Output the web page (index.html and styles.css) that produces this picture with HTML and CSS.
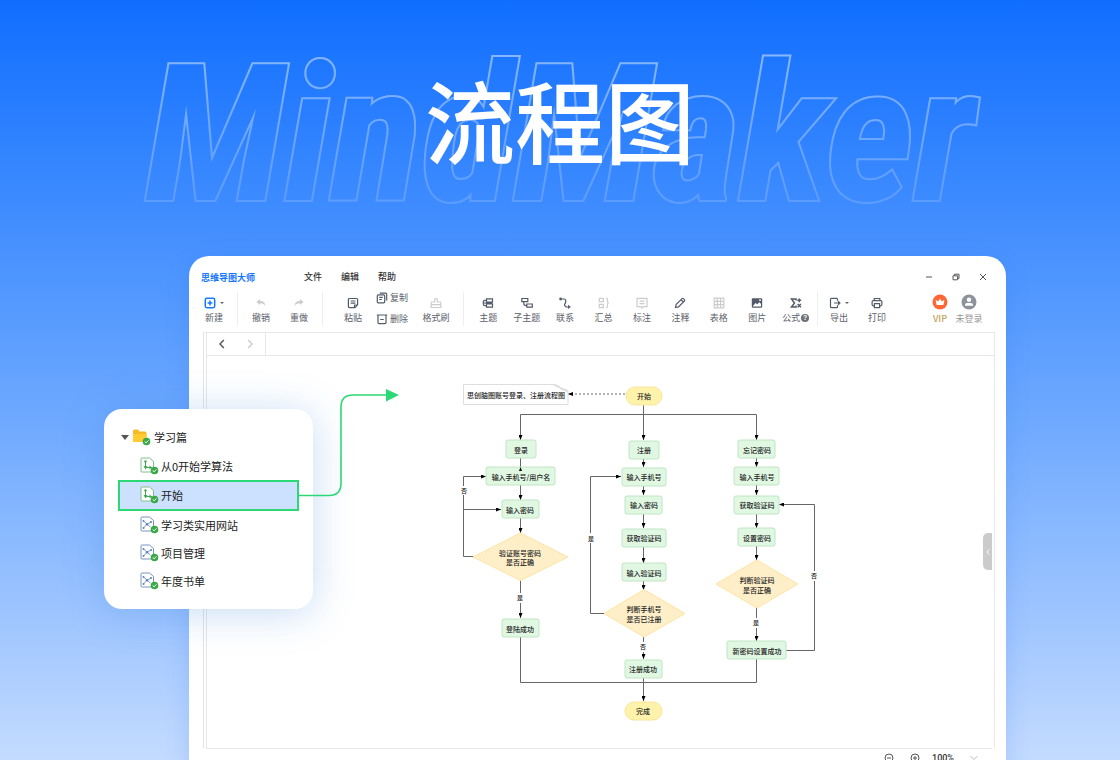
FILE: index.html
```html
<!DOCTYPE html>
<html lang="zh-CN">
<head>
<meta charset="utf-8">
<meta name="viewport" content="width=device-width, initial-scale=1">
<title>流程图 - MindMaker</title>
<link rel="stylesheet" href="styles.css">
</head>
<body>
<main class="page">
  <header class="hero">
    <svg class="watermark" aria-hidden="true">
      <defs>
        <linearGradient id="fade" gradientUnits="userSpaceOnUse" x1="0" y1="40" x2="0" y2="210">
          <stop offset="0" stop-color="#fff" stop-opacity=".5"/>
          <stop offset="1" stop-color="#fff" stop-opacity=".14"/>
        </linearGradient>
        <mask id="outside" maskUnits="userSpaceOnUse" x="0" y="0" width="100%" height="100%">
          <rect width="100%" height="100%" fill="#fff"/>
          <use href="#word" fill="#000" stroke="none"/>
        </mask>
      </defs>
      <g mask="url(#outside)" fill="none" stroke="url(#fade)" stroke-width="4">
        <text id="word" x="50%" y="200">MindMaker</text>
      </g>
    </svg>
    <h1 class="title">流程图</h1>
  </header>

  <div class="stage">
    <section class="window">
      <div class="titlebar">
        <strong class="brand">思维导图大师</strong>
        <nav class="menu">
          <button type="button">文件</button>
          <button type="button">编辑</button>
          <button type="button">帮助</button>
        </nav>
        <div class="controls">
          <button type="button" aria-label="最小化"><svg viewBox="0 0 8 8"><path d="M1 4h6"/></svg></button>
          <button type="button" aria-label="还原"><svg viewBox="0 0 8 8"><path d="M1 2.800h4.600v4H1zM2.400 2.600V1.200H7v4.200H5.800"/></svg></button>
          <button type="button" aria-label="关闭"><svg viewBox="0 0 8 8"><path d="M1 1l6 6M7 1L1 7"/></svg></button>
        </div>
      </div>

      <div class="toolbar">
        <div class="group">
          <button type="button" class="tool new"><span class="with-caret"><svg viewBox="0 0 12 12"><rect x="1.300" y="1.300" width="9.400" height="9.400" rx="1.600"/><path d="M6 3.600v4.800M3.600 6h4.800"/></svg><i class="caret"></i></span>新建</button>
        </div>
        <div class="group history">
          <button type="button" class="tool faded"><svg viewBox="0 0 12 12"><path class="solid" d="M1.500 5L5 2v2c3.600 0 5.200 2 5.500 5C9.300 7 8 6.200 5 6.200V8z"/></svg>撤销</button>
          <button type="button" class="tool faded"><svg viewBox="0 0 12 12"><path class="solid" d="M10.500 5L7 2v2C3.400 4 1.800 6 1.500 9 2.700 7 4 6.200 7 6.200V8z"/></svg>重做</button>
        </div>
        <div class="group edit">
          <button type="button" class="tool"><svg viewBox="0 0 12 12"><path d="M2.400 1.500h7.200q1 0 1 1v5.300L8 10.600H2.400q-1 0-1-1V2.500q0-1 1-1zM3.700 4h4.700M3.700 6.200h4.700M7.500 10.300V8h2.800"/></svg>粘贴</button>
          <div class="stack">
            <button type="button" class="mini"><svg viewBox="0 0 12 12"><path d="M3.800 1.200h5.700q1.200 0 1.200 1.200v6M2.300 2.900h5.400q1 0 1 1v5.900q0 1-1 1H2.300q-1 0-1-1V3.900q0-1 1-1zM3.200 5.300h3.600M3.200 7.500h2.600"/></svg>复制</button>
            <button type="button" class="mini"><svg viewBox="0 0 12 12"><path d="M.8 2h10.400M2 2v7.600q0 1 1 1h6q1 0 1-1V2M4.200 6.500h3.600"/></svg>删除</button>
          </div>
          <button type="button" class="tool faded"><svg viewBox="0 0 12 12"><path d="M4.700 5V2.500q0-1 1.300-1t1.300 1V5h2.700q.8 0 .8.800v4.700H1.200V5.800q0-.8.800-.8zM1.200 7.600h9.600"/></svg>格式刷</button>
        </div>
        <div class="group insert">
          <button type="button" class="tool"><svg viewBox="0 0 12 12"><path d="M4.500 1.800h6v3.200h-6zM4.500 7h6v3.200h-6zM4.500 3.400H3Q1.300 3.400 1.300 5v2q0 1.600 1.700 1.600h1.500M1.500 6h9"/></svg>主题</button>
          <button type="button" class="tool"><svg viewBox="0 0 12 12"><path d="M.8 1.500h6v3.200h-6zM5.800 7h5.500v3.200H5.800zM2.800 4.700v2q0 1.900 3 1.900"/></svg>子主题</button>
          <button type="button" class="tool"><svg viewBox="0 0 12 12"><path d="M1 2h4q1.800 0 1.800 2T5.800 7t1.400 3H10"/><circle class="solid" cx="1.600" cy="2" r="1.400"/><path class="solid" d="M9 7.800l2.800 2.200L9 12z"/></svg>联系</button>
          <button type="button" class="tool faded"><svg viewBox="0 0 12 12"><path d="M1.300 1.300h4v3.400h-4zM1.300 7.300h4v3.400h-4zM8 1q1.500 0 1.500 1.500V4.500Q9.500 6 10.800 6 9.500 6 9.500 7.500v2Q9.500 11 8 11"/></svg>汇总</button>
          <button type="button" class="tool faded"><svg viewBox="0 0 12 12"><path d="M1 1.300h10v8.400H7.200L6 11 4.800 9.700H1zM3.500 4.200h5M3.500 6.700h5"/></svg>标注</button>
          <button type="button" class="tool"><svg viewBox="0 0 12 12"><path d="M1.500 10.500l.6-3L8 1.600q.7-.6 1.400 0l1 1q.6.7 0 1.400L4.500 9.900zM7 2.800L9.300 5"/></svg>注释</button>
          <button type="button" class="tool faded"><svg viewBox="0 0 12 12"><path d="M1.200 1.200h9.600v9.600H1.200zM4.400 1.200v9.600M7.600 1.200v9.600M1.200 4.400h9.600M1.200 7.600h9.600"/></svg>表格</button>
          <button type="button" class="tool"><svg viewBox="0 0 12 12"><rect class="solid" x=".8" y="1.200" width="10.400" height="9.600" rx="1"/><path class="paper" d="M2 9l2.500-3 1.700 1.200 2.300-2L10 7v2.500H2zM8 2.500h2v1.200H8z"/></svg>图片</button>
          <button type="button" class="tool"><svg viewBox="0 0 12 12"><path class="heavy" d="M6 3.500V2H1.500l3 4-3 4H6V8.500M7.300 3.300h3.900M9.250 1.400v3.800M7.600 7l3.300 3.200M10.900 7l-3.300 3.200"/></svg><span class="help-label">公式<i class="help">?</i></span></button>
        </div>
        <div class="group output">
          <button type="button" class="tool"><span class="with-caret"><svg viewBox="0 0 12 12"><path d="M8.500 3.800V2.300q0-1-1-1h-5q-1 0-1 1v7.400q0 1 1 1h5q1 0 1-1V8.200M5 6h5.500M9 4.200L10.900 6 9 7.800"/></svg><i class="caret"></i></span>导出</button>
          <button type="button" class="tool"><svg viewBox="0 0 12 12"><path d="M3.200 3.600V1.500h5.600v2.100M3.200 8.800H2.300q-1.200 0-1.200-1.200V4.800q0-1.200 1.200-1.200h7.400q1.200 0 1.200 1.200v2.800q0 1.200-1.200 1.200h-.9M3.400 6.700h5.200v3.900H3.400z"/></svg>打印</button>
        </div>
        <div class="account">
          <button type="button" class="vip"><svg viewBox="0 0 16 16"><circle cx="8" cy="8" r="7.500" fill="#ff6633"/><path d="M4.600 11L3.600 5.800l2.600 1.600L8 4.400l1.800 3 2.600-1.600-1 5.200z" fill="#fff"/></svg>VIP</button>
          <button type="button" class="user"><svg viewBox="0 0 16 16"><circle cx="8" cy="8" r="7.500" fill="#8d929b"/><circle cx="8" cy="5.800" r="2.200" fill="#fff"/><path d="M4 11.800v-1q0-1.800 2-1.800h4q2 0 2 1.800v1z" fill="#fff"/></svg>未登录</button>
        </div>
      </div>

      <div class="workspace">
        <div class="tabs">
          <div class="pager">
            <button type="button" aria-label="后退"><svg viewBox="0 0 10 10"><path d="M6.800 1L3 5l3.800 4"/></svg></button>
            <button type="button" class="off" aria-label="前进"><svg viewBox="0 0 10 10"><path d="M3.200 1L7 5 3.200 9"/></svg></button>
          </div>
        </div>
        <div class="canvas">
          <svg class="chart" viewBox="207 356 787 392" role="img" aria-label="账号登录与注册流程图">
            <defs>
              <marker id="tip" viewBox="0 0 5 4" refX="5" refY="2" markerWidth="5" markerHeight="4" markerUnits="userSpaceOnUse" orient="auto"><path d="M0 0l5 2-5 2z"/></marker>
            </defs>
            <g class="wire">
              <path class="dashed" d="M625 394H574"/>
              <path d="M573 394H568" marker-end="url(#tip)"/>
              <path d="M643.500 405v35" marker-end="url(#tip)"/>
              <path d="M643.500 414.500H520.500V440" marker-end="url(#tip)"/>
              <path d="M643.500 414.500H756.500V440" marker-end="url(#tip)"/>
              <path d="M520.500 458v10"/>
              <path d="M520.500 485v15" marker-end="url(#tip)"/>
              <path d="M520.500 518v15" marker-end="url(#tip)"/>
              <path d="M520.500 580v38" marker-end="url(#tip)"/>
              <path d="M474 556.500H463.500V476.500H486" marker-end="url(#tip)"/>
              <path d="M463.500 509.500H501" marker-end="url(#tip)"/>
              <path d="M643.500 458v9" marker-end="url(#tip)"/>
              <path d="M643.500 486v9" marker-end="url(#tip)"/>
              <path d="M643.500 514v14" marker-end="url(#tip)"/>
              <path d="M643.500 546v17" marker-end="url(#tip)"/>
              <path d="M643.500 581v9" marker-end="url(#tip)"/>
              <path d="M643.500 637v22" marker-end="url(#tip)"/>
              <path d="M643.500 677v24" marker-end="url(#tip)"/>
              <path d="M604 613.500H590.500V476.500H621" marker-end="url(#tip)"/>
              <path d="M756.500 458v9" marker-end="url(#tip)"/>
              <path d="M756.500 485v10" marker-end="url(#tip)"/>
              <path d="M756.500 513v15" marker-end="url(#tip)"/>
              <path d="M756.500 546v14" marker-end="url(#tip)"/>
              <path d="M756.500 608v33" marker-end="url(#tip)"/>
              <path d="M786 650.500H814.500V504.500H779" marker-end="url(#tip)"/>
              <path d="M520.500 637v45.500H756.500V659"/>
            </g>
            <g class="note">
              <path d="M463.500 384.500H554L568 391V404.500H463.500z"/>
              <path class="fold" d="M553 384.500Q560 385 562 390 567 388 568 392z"/>
            </g>
            <g class="pill">
              <rect x="626" y="387" width="36" height="18" rx="9"/>
              <rect x="625" y="702" width="37" height="18" rx="9"/>
            </g>
            <g class="step">
              <rect x="506" y="440" width="30" height="18" rx="2"/>
              <rect x="486" y="467" width="69" height="18" rx="2"/>
              <rect x="502" y="500" width="37" height="18" rx="2"/>
              <rect x="502" y="619" width="37" height="18" rx="2"/>
              <rect x="629" y="441" width="30" height="18" rx="2"/>
              <rect x="622" y="468" width="44" height="18" rx="2"/>
              <rect x="625" y="496" width="37" height="18" rx="2"/>
              <rect x="622" y="529" width="44" height="18" rx="2"/>
              <rect x="622" y="563" width="44" height="18" rx="2"/>
              <rect x="625" y="660" width="37" height="18" rx="2"/>
              <rect x="738" y="440" width="37" height="18" rx="2"/>
              <rect x="734" y="467" width="45" height="18" rx="2"/>
              <rect x="734" y="496" width="45" height="18" rx="2"/>
              <rect x="738" y="528" width="37" height="18" rx="2"/>
              <rect x="727" y="641" width="59" height="18" rx="2"/>
            </g>
            <path class="mark" d="M519 471l1.500-4 1.500 4z"/>
            <g class="choice">
              <path d="M473 557l47.500-24 47.500 24-47.500 23.500z"/>
              <path d="M604 613.500l40-24 41 24-41 23.500z"/>
              <path d="M716 584l41-24 41 24-41 24z"/>
            </g>
            <g class="gap">
              <rect x="460" y="486" width="8" height="9"/>
              <rect x="516" y="593" width="9" height="10"/>
              <rect x="587" y="533" width="8" height="10"/>
              <rect x="639" y="642" width="9" height="10"/>
              <rect x="752" y="618" width="9" height="10"/>
              <rect x="810" y="571" width="9" height="10"/>
            </g>
            <g class="label">
              <text x="516" y="398">思创脑图账号登录、注册流程图</text>
              <text x="644" y="399">开始</text>
              <text x="521" y="453">登录</text>
              <text x="521" y="480">输入手机号/用户名</text>
              <text x="520" y="513">输入密码</text>
              <text x="520" y="556">验证账号密码</text>
              <text x="520" y="565">是否正确</text>
              <text x="520" y="632">登陆成功</text>
              <text x="644" y="453">注册</text>
              <text x="644" y="480">输入手机号</text>
              <text x="644" y="508">输入密码</text>
              <text x="644" y="541">获取验证码</text>
              <text x="644" y="576">输入验证码</text>
              <text x="644" y="612">判断手机号</text>
              <text x="644" y="622">是否已注册</text>
              <text x="643" y="672">注册成功</text>
              <text x="643" y="714">完成</text>
              <text x="757" y="453">忘记密码</text>
              <text x="757" y="480">输入手机号</text>
              <text x="757" y="508">获取验证码</text>
              <text x="757" y="541">设置密码</text>
              <text x="757" y="583">判断验证码</text>
              <text x="757" y="593">是否正确</text>
              <text x="757" y="654">新密码设置成功</text>
            </g>
            <g class="label small">
              <text x="464" y="493">否</text>
              <text x="520" y="600">是</text>
              <text x="591" y="541">是</text>
              <text x="643" y="649">否</text>
              <text x="756" y="625">是</text>
              <text x="814" y="578">否</text>
            </g>
          </svg>
          <button type="button" class="handle" aria-label="展开侧栏"><svg viewBox="0 0 6 8"><path d="M4.500 1.500L2 4l2.500 2.500"/></svg></button>
        </div>
      </div>
      <footer class="status">
        <div class="steps">
          <button type="button" aria-label="缩小"><svg viewBox="0 0 10 10"><circle cx="5" cy="5" r="4"/><path d="M3 5h4"/></svg></button>
          <button type="button" aria-label="放大"><svg viewBox="0 0 10 10"><circle cx="5" cy="5" r="4"/><path d="M3 5h4M5 3v4"/></svg></button>
        </div>
        <button type="button" class="zoom">100%<svg viewBox="0 0 10 10"><path d="M1.500 3L5 6.500 8.500 3"/></svg></button>
      </footer>
    </section>

    <aside class="panel">
      <button type="button" class="row folder"><i class="twisty"></i><svg viewBox="0 0 20 18"><path d="M1 3q0-1.500 1.500-1.500H6L7.500 3.500H13q1.500 0 1.500 1.500v9H2.500Q1 14 1 12.500z" fill="#f7b928"/><path d="M1 6h13.500v8H2.500Q1 14 1 12.500z" fill="#ffcc33"/><use href="#done"/></svg>学习篇</button>
      <button type="button" class="row"><svg viewBox="0 0 20 18"><use href="#flow"/></svg>从0开始学算法</button>
      <button type="button" class="row selected"><svg viewBox="0 0 20 18"><use href="#flow"/></svg>开始</button>
      <button type="button" class="row"><svg viewBox="0 0 20 18"><use href="#mind"/></svg>学习类实用网站</button>
      <button type="button" class="row"><svg viewBox="0 0 20 18"><use href="#mind"/></svg>项目管理</button>
      <button type="button" class="row"><svg viewBox="0 0 20 18"><use href="#mind"/></svg>年度书单</button>
    </aside>
    <svg class="pointer" viewBox="0 0 102 112" aria-hidden="true"><path d="M0 106.500H30Q42 106.500 42 94.500V18Q42 6 54 6H88" fill="none" stroke="#2bd974" stroke-width="1.600"/><path d="M87 0l13 6-13 6.500z" fill="#2bd974"/></svg>
  </div>

  <svg class="symbols" aria-hidden="true">
    <symbol id="done" viewBox="0 0 20 18"><circle cx="14.500" cy="13.500" r="3.800" fill="#3aa846"/><path d="M12.700 13.500l1.400 1.300 2.300-2.400" fill="none" stroke="#fff"/></symbol>
    <symbol id="flow" viewBox="0 0 20 18"><path d="M2 1H9.500L13.500 4.500v10.500H2q-1 0-1-1V2q0-1 1-1z" fill="#fff" stroke="#7cc189"/><path d="M5.500 4v6M5.500 10.500H12" fill="none" stroke="#43a853"/><circle cx="5.500" cy="4.500" r="1.200" fill="#43a853"/><path d="M3.500 9h4l-2 3.500zM9.500 8.500v4L12 10.500z" fill="#43a853"/><use href="#done"/></symbol>
    <symbol id="mind" viewBox="0 0 20 18"><path d="M2 1H9.500L13.500 4.500v10.500H2q-1 0-1-1V2q0-1 1-1z" fill="#fff" stroke="#7895c4"/><path d="M3.500 5L7 8.200 3.500 12M7 8.200L11 6M7 8.200l3.500 3" fill="none" stroke="#829dcb"/><g fill="#5f80bb"><circle cx="3.500" cy="5" r="1"/><circle cx="3.500" cy="12" r="1"/><circle cx="7" cy="8.200" r="1.200"/><circle cx="11" cy="6" r="1"/></g><use href="#done"/></symbol>
  </svg>
</main>
</body>
</html>
```

FILE: styles.css
```css
* {
  box-sizing: border-box;
}

body {
  margin: 0;
  font-family: "Noto Sans CJK SC", sans-serif;
  font-size: 9px;
  color: #333;
}

button {
  margin: 0;
  padding: 0;
  border: 0;
  background: none;
  color: inherit;
  font: inherit;
  line-height: 12px;
}

svg {
  display: block;
  flex: none;
}

.page {
  display: flex;
  flex-direction: column;
  height: 100vh;
  overflow: hidden;
  background: linear-gradient(#106eff 0, #4a93ff 34%, #6ca8ff 54%, #a0c6ff 82%, #c4dbff 100%);
}

.symbols {
  position: absolute;
  width: 0;
  height: 0;
}

/* Heading with outlined product name behind it */
.hero {
  display: grid;
  flex: none;
  height: 256px;
  justify-items: center;
}

.watermark,
.title {
  grid-area: 1 / 1;
  margin: 0;
}

.watermark {
  width: 100%;
  height: 256px;
}

.watermark text {
  font: italic 700 190px "Roboto Condensed", "Liberation Sans Narrow", sans-serif;
  text-anchor: middle;
}

.title {
  z-index: 1;
  padding-top: 53px;
  color: #fff;
  font-size: 90px;
  font-weight: 500;
  line-height: 130px;
  white-space: nowrap;
}

.stage {
  position: relative;
  display: flex;
  flex: 1;
  padding: 0 114px 0 189px;
}

/* Application window */
.window {
  flex: 1;
  min-width: 0;
  height: 540px;
  border-radius: 20px 20px 0 0;
  background: #fff;
  box-shadow: 0 6px 24px rgba(40, 110, 220, .2);
}

.titlebar {
  display: flex;
  align-items: center;
  height: 34px;
  padding: 8px 19px 0 12px;
}

.brand {
  width: 103px;
  color: #1677ff;
  font-weight: 700;
}

.menu {
  display: flex;
  gap: 19px;
  font-weight: 500;
}

.controls {
  display: flex;
  gap: 19px;
  margin-left: auto;
}

.controls svg {
  width: 8px;
  height: 8px;
  fill: none;
  stroke: #555;
}

.toolbar {
  display: flex;
  height: 42px;
  padding: 2px 23px 0 6px;
  color: #5c616b;
}

.group {
  display: flex;
  height: 34px;
  border-right: 1px solid #eee;
}

.group:first-child {
  width: 43px;
}

.history {
  width: 85px;
  padding-left: 4px;
}

.edit {
  width: 141px;
  padding-left: 11px;
  gap: 1px;
}

.insert {
  width: 354px;
  padding: 0 2px 0 5px;
}

.output {
  padding-left: 2px;
  border-right: 0;
}

.tool {
  display: flex;
  flex-direction: column;
  align-items: center;
  gap: 3px;
  width: 38px;
  padding-top: 5px;
  white-space: nowrap;
}

.insert .tool {
  flex: 1;
}

.tool svg,
.mini svg {
  width: 12px;
  height: 12px;
  fill: none;
  stroke: #535a68;
  stroke-width: 1.2;
}

.tool .solid {
  fill: #535a68;
  stroke: none;
}

.tool .paper {
  fill: #fff;
  stroke: none;
}

.tool .heavy {
  stroke-width: 1.5;
}

.tool.new svg {
  stroke: #1677ff;
  stroke-width: 1.5;
}

.tool.faded svg {
  stroke: #ccc;
}

.tool.faded .solid {
  fill: #ccc;
}

.with-caret {
  display: flex;
  align-items: center;
  gap: 4px;
}

.caret {
  border: 2px solid transparent;
  border-top-color: #666;
  border-bottom: 0;
}

.help-label {
  display: flex;
  align-items: center;
  gap: 1px;
}

.help {
  width: 8px;
  height: 8px;
  border-radius: 50%;
  background: #6b6f78;
  color: #fff;
  font: 700 7px/8px "Liberation Sans", sans-serif;
}

.stack {
  display: flex;
  flex-direction: column;
  gap: 9px;
  width: 43px;
  padding-left: 3px;
}

.mini {
  display: flex;
  align-items: center;
  gap: 2px;
  height: 12px;
  white-space: nowrap;
}

.account {
  display: flex;
  gap: 1px;
  margin-left: auto;
}

.account button {
  display: flex;
  flex-direction: column;
  align-items: center;
  gap: 3px;
  width: 28px;
  padding-top: 2px;
  color: #999;
  white-space: nowrap;
}

.account .vip {
  color: #c2a15c;
  font-weight: 500;
}

.account svg {
  width: 16px;
  height: 16px;
}

.workspace {
  margin: 0 11px 0 14px;
  padding-left: 2px;
  border-top: 1px solid #e8e8e8;
  border-left: 1px solid #e4e4e4;
}

.tabs {
  height: 23px;
  border: 1px solid #e8e8e8;
  border-width: 0 1px 1px;
}

.pager {
  display: flex;
  gap: 18px;
  align-items: center;
  width: 59px;
  height: 22px;
  padding-left: 10px;
  border-right: 1px solid #e8e8e8;
}

.pager svg,
.status svg {
  width: 10px;
  height: 10px;
  fill: none;
  stroke: #555;
  stroke-width: 1.4;
}

.pager .off svg {
  stroke: #ccc;
}

.canvas {
  position: relative;
  border: 1px solid #e8e8e8;
  border-width: 0 1px;
}

.chart {
  width: 100%;
  height: 392px;
}

.handle {
  position: absolute;
  top: 177px;
  right: 2px;
  display: grid;
  place-items: center;
  width: 9px;
  height: 37px;
  border-radius: 5px 0 0 5px;
  background: #c9cccb;
}

.handle svg {
  width: 6px;
  height: 8px;
  fill: none;
  stroke: #fff;
}

.status {
  display: flex;
  align-items: center;
  justify-content: flex-end;
  gap: 12px;
  margin: 0 14px 0 17px;
  padding: 3px 13px 0 0;
  border-top: 1px solid #e8e8e8;
}

.steps {
  display: flex;
  gap: 16px;
}

.status svg {
  stroke-width: 1;
}

.zoom {
  display: flex;
  align-items: center;
  gap: 15px;
  font-family: Roboto, sans-serif;
  font-weight: 500;
}

.zoom svg {
  stroke: #bbb;
}

/* Flow chart */
.wire path {
  fill: none;
  stroke: #666;
}

.wire .dashed {
  stroke-dasharray: 2 2;
}

.note path {
  fill: #fff;
  stroke: #ddd;
}

.note .fold {
  fill: #e6e6e6;
}

.pill rect {
  fill: #fff3ab;
  stroke: #fbe49a;
}

.step rect {
  fill: #e0f7e2;
  stroke: #c0e6c4;
}

.choice path {
  fill: #ffefc9;
  stroke: #ffe4a0;
}

.gap rect {
  fill: #fff;
}

.label text {
  fill: #222;
  font-size: 7px;
  font-weight: 500;
  text-anchor: middle;
}

.small text {
  font-size: 6px;
}

/* File list lying over the window */
.panel {
  position: absolute;
  top: 153px;
  left: 104px;
  display: flex;
  flex-direction: column;
  width: 209px;
  padding: 14px;
  border-radius: 18px;
  background: #fff;
  box-shadow: 0 4px 40px rgba(50, 130, 220, .28);
  color: #222;
  font-size: 11px;
}

.row {
  display: flex;
  align-items: center;
  gap: 1px;
  height: 28px;
  padding: 0 0 1px 22px;
  text-align: left;
}

.row svg {
  width: 20px;
  height: 18px;
}

.row.folder {
  gap: 3px;
  height: 29px;
  padding-left: 3px;
}

.row.folder svg {
  margin-right: -1px;
}

.row.selected {
  height: 31px;
  padding-left: 20px;
  border: 2px solid #2bd974;
  background: #cce0ff;
}

.twisty {
  border: 4px solid transparent;
  border-top: 5px solid #555;
  border-bottom: 0;
}

.pointer {
  position: absolute;
  top: 133px;
  left: 299px;
  width: 102px;
  height: 112px;
}
```
